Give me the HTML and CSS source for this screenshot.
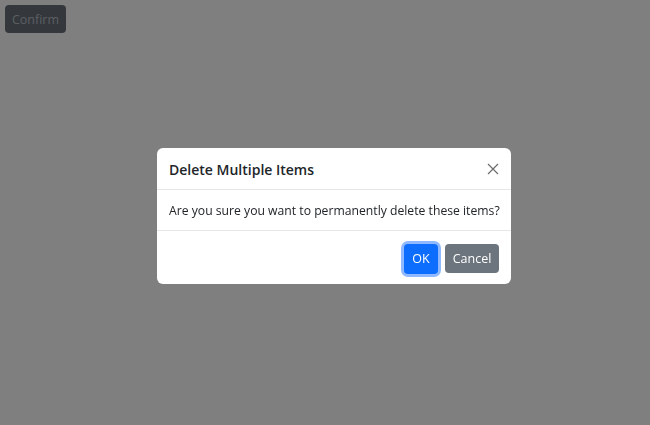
FILE: index.html
```html
<!DOCTYPE html>
<html>
<head>
<meta charset="utf-8">
<link rel="stylesheet" href="styles.css">
</head>
<body>
<button class="btn btn-dark">Confirm</button>
<div class="backdrop"></div>
<div class="modal-wrap">
  <div class="modal">
    <div class="modal-header">
      <h5 class="modal-title">Delete Multiple Items</h5>
      <button class="btn-close" aria-label="Close">
        <svg width="12" height="12" viewBox="0 0 12 12"><path d="M1 1L11 11M11 1L1 11" stroke="#6c6c6c" stroke-width="1.2" fill="none"/></svg>
      </button>
    </div>
    <div class="modal-body">Are you sure you want to permanently delete these items?</div>
    <div class="modal-footer">
      <button class="btn btn-primary">OK</button>
      <button class="btn btn-secondary">Cancel</button>
    </div>
  </div>
</div>
</body>
</html>
```
FILE: styles.css
```css
html, body { margin: 0; padding: 0; }
body {
  width: 650px; height: 425px; overflow: hidden;
  font-family: "Open Sans", "Noto Sans", sans-serif;
  background: #fff;
  padding: 5px;
  box-sizing: border-box;
}
.btn {
  font-family: inherit;
  font-size: 12.5px;
  border: 1px solid transparent;
  border-radius: 4px;
  cursor: pointer;
  line-height: 1.2;
  padding: 0;
}
.btn-dark {
  background: #686f79;
  color: #b5bdc4;
  height: 28px;
  width: 61px;
}
.backdrop {
  position: fixed; inset: 0;
  background: rgba(0,0,0,0.5);
}
.modal-wrap {
  position: fixed; inset: 0;
  display: flex; justify-content: flex-start;
  padding: 148px 0 0 157px;
  box-sizing: border-box;
}
.modal {
  width: 354px;
  height: 136px;
  background: #fff;
  border-radius: 6px;
  display: flex; flex-direction: column;
  align-self: flex-start;
  box-sizing: border-box;
}
.modal-header {
  height: 42px;
  display: flex; align-items: center; justify-content: space-between;
  padding: 1px 12px 0 12px;
  border-bottom: 1px solid #e6e6e6;
  box-sizing: border-box;
}
.modal-title {
  margin: 0;
  font-size: 14px;
  font-weight: 600;
  color: #212529;
}
.btn-close {
  background: none; border: 0; padding: 0;
  width: 12px; height: 12px;
  display: flex;
}
.modal-body {
  height: 41px;
  display: flex; align-items: center;
  padding: 0 12px;
  font-size: 12.2px;
  white-space: nowrap;
  color: #212529;
  border-bottom: 1px solid #e6e6e6;
  box-sizing: border-box;
}
.modal-footer {
  flex: 1;
  display: flex; justify-content: flex-end; align-items: center;
  gap: 7px;
  padding: 2px 12px 0;
}
.btn-primary {
  background: #0d6efd; color: #fff;
  width: 34px; height: 30px;
  box-shadow: 0 0 0 3px #8fb8fe;
}
.btn-secondary {
  background: #6c757d; color: #fff;
  width: 54px; height: 29px;
}
```
